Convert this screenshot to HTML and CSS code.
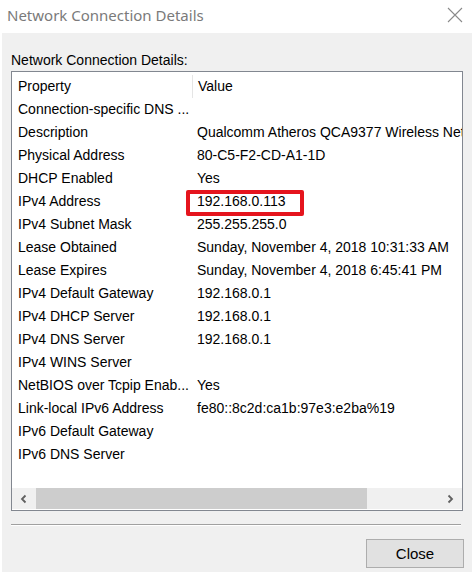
FILE: index.html
```html
<!DOCTYPE html>
<html>
<head>
<meta charset="utf-8">
<link rel="stylesheet" href="styles.css">
</head>
<body>
<div class="window">
  <div class="titlebar">
    <span class="title">Network Connection Details</span>
    <svg class="close-x" width="16" height="16" viewBox="0 0 16 16"><path d="M1 1 L15 15 M15 1 L1 15" stroke="#8a8a8a" stroke-width="1.1" fill="none"/></svg>
  </div>
  <div class="panel">
    <div class="label">Network Connection Details:</div>
    <div class="listbox">
      <div class="row header"><div class="c1">Property</div><div class="c2">Value</div></div>
      <div class="row"><div class="c1">Connection-specific DNS ...</div><div class="c2"></div></div>
      <div class="row"><div class="c1">Description</div><div class="c2">Qualcomm Atheros QCA9377 Wireless Network Adapter</div></div>
      <div class="row"><div class="c1">Physical Address</div><div class="c2">80-C5-F2-CD-A1-1D</div></div>
      <div class="row"><div class="c1">DHCP Enabled</div><div class="c2">Yes</div></div>
      <div class="row"><div class="c1">IPv4 Address</div><div class="c2 marked">192.168.0.113<span class="redbox"></span></div></div>
      <div class="row"><div class="c1">IPv4 Subnet Mask</div><div class="c2">255.255.255.0</div></div>
      <div class="row"><div class="c1">Lease Obtained</div><div class="c2">Sunday, November 4, 2018 10:31:33 AM</div></div>
      <div class="row"><div class="c1">Lease Expires</div><div class="c2">Sunday, November 4, 2018 6:45:41 PM</div></div>
      <div class="row"><div class="c1">IPv4 Default Gateway</div><div class="c2">192.168.0.1</div></div>
      <div class="row"><div class="c1">IPv4 DHCP Server</div><div class="c2">192.168.0.1</div></div>
      <div class="row"><div class="c1">IPv4 DNS Server</div><div class="c2">192.168.0.1</div></div>
      <div class="row"><div class="c1">IPv4 WINS Server</div><div class="c2"></div></div>
      <div class="row"><div class="c1">NetBIOS over Tcpip Enab...</div><div class="c2">Yes</div></div>
      <div class="row"><div class="c1">Link-local IPv6 Address</div><div class="c2">fe80::8c2d:ca1b:97e3:e2ba%19</div></div>
      <div class="row"><div class="c1">IPv6 Default Gateway</div><div class="c2"></div></div>
      <div class="row"><div class="c1">IPv6 DNS Server</div><div class="c2"></div></div>
      <div class="spacer"></div>
      <div class="hscroll">
        <div class="sbtn"><svg width="10" height="10" viewBox="0 0 10 10"><path d="M6.5 1.5 L3 5 L6.5 8.5" stroke="#606060" stroke-width="1.8" fill="none"/></svg></div>
        <div class="track"><div class="thumb"></div></div>
        <div class="sbtn"><svg width="10" height="10" viewBox="0 0 10 10"><path d="M3.5 1.5 L7 5 L3.5 8.5" stroke="#606060" stroke-width="1.8" fill="none"/></svg></div>
      </div>
    </div>
    <div class="sep"></div>
    <div class="footer">
      <button class="btn">Close</button>
    </div>
  </div>
</div>
</body>
</html>
```

FILE: styles.css
```css
html, body {
  margin: 0;
  padding: 0;
  background: #ffffff;
}
.window {
  width: 474px;
  height: 572px;
  display: flex;
  flex-direction: column;
  font-family: "Liberation Sans", Arial, sans-serif;
  overflow: hidden;
}
.titlebar {
  height: 33px;
  display: flex;
  align-items: center;
  justify-content: space-between;
  padding: 0 11px 0 7px;
  background: #ffffff;
  flex: none;
}
.title {
  font-family: "Noto Sans", "Open Sans", sans-serif;
  font-size: 15px;
  color: #7a7a7a;
  margin-top: -3px;
}
.close-x {
  margin-top: -4px;
}
.panel {
  flex: 1;
  background: #f0f0f0;
  margin: 0 2px 0 2px;
  padding: 0 9px 0 9px;
  display: flex;
  flex-direction: column;
}
.label {
  font-size: 14px;
  color: #000;
  margin-top: 17px;
  height: 21px;
  line-height: 21px;
}
.listbox {
  height: 440px;
  box-sizing: border-box;
  border: 1px solid #828790;
  background: #ffffff;
  padding-top: 3px;
  display: flex;
  flex-direction: column;
}
.row {
  display: flex;
  height: 23px;
  line-height: 23px;
  font-size: 14px;
  color: #000;
  white-space: nowrap;
  flex: none;
}
.c1 {
  width: 180px;
  padding-left: 6px;
  box-sizing: border-box;
  overflow: hidden;
}
.c2 {
  flex: 1;
  padding-left: 5px;
  overflow: hidden;
  position: relative;
}
.header .c2 {
  border-left: 1px solid #e5e5e5;
}
.c2.marked {
  overflow: visible;
}
.redbox {
  position: absolute;
  left: -6px;
  top: 0px;
  width: 118px;
  height: 26px;
  box-sizing: border-box;
  border: 4px solid #e5141d;
  border-radius: 2px;
}
.spacer {
  flex: 1;
}
.hscroll {
  height: 21px;
  margin-bottom: 1px;
  display: flex;
  background: #f0f0f0;
  flex: none;
}
.sbtn {
  width: 24px;
  display: flex;
  align-items: center;
  justify-content: center;
  flex: none;
}
.track {
  flex: 1;
  display: flex;
}
.thumb {
  width: 331px;
  background: #cdcdcd;
}
.sep {
  margin-top: 13px;
  height: 1px;
  background: #a0a0a0;
  border-bottom: 1px solid #ffffff;
  margin-right: 2px;
}
.footer {
  display: flex;
  justify-content: flex-end;
  margin-top: 13px;
}
.btn {
  width: 98px;
  height: 29px;
  background: #e1e1e1;
  border: 1px solid #adadad;
  font-family: "Liberation Sans", Arial, sans-serif;
  font-size: 15px;
  color: #000;
  padding: 0;
  margin-right: -1px;
}
```
